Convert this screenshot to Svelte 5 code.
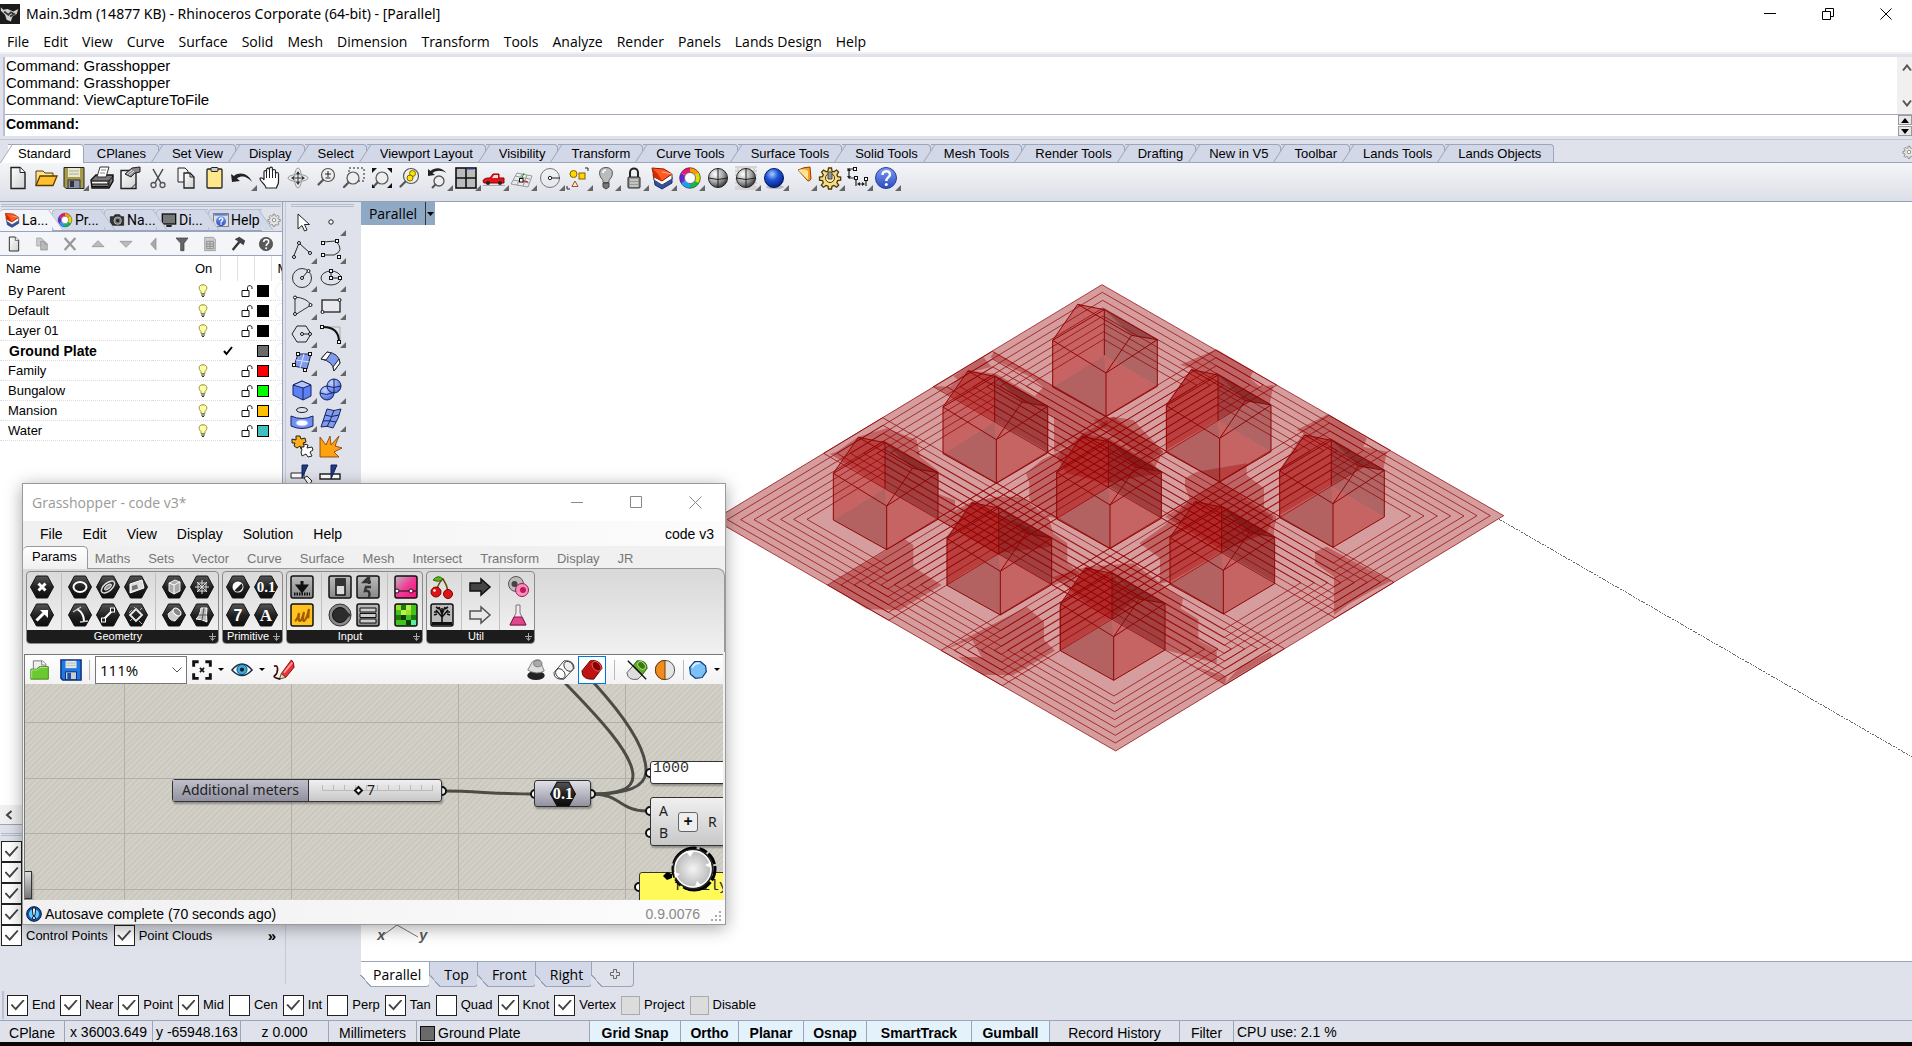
<script>
  const menus = ['File', 'Edit', 'View', 'Curve', 'Surface', 'Solid', 'Mesh', 'Dimension', 'Transform', 'Tools', 'Analyze', 'Render', 'Panels', 'Lands Design', 'Help'];
  const history = ['Command: Grasshopper', 'Command: Grasshopper', 'Command: ViewCaptureToFile'];
  const tabs = ['Standard', 'CPlanes', 'Set View', 'Display', 'Select', 'Viewport Layout', 'Visibility', 'Transform', 'Curve Tools', 'Surface Tools', 'Solid Tools', 'Mesh Tools', 'Render Tools', 'Drafting', 'New in V5', 'Toolbar', 'Lands Tools', 'Lands Objects'];

  // Names that end in "+" carry a fly-out corner.
  const tools = ['new', 'open', 'save+', 'print', 'props', 'cut', 'copy', 'paste', 'undo+', 'pan', 'rotate', 'zoom', 'zoomwin', 'zoomext', 'zoomsel', 'undoview+', 'fourview+', 'car+', 'cplane+', 'radius+', 'osnap+', 'bulb+', 'lock+', 'layers+', 'wheel+', 'sphere', 'sphereg+', 'ball+', 'spot+', 'gear+', 'dims+', 'help+'];
  const palette = ['arrow', 'point+', 'poly+', 'curve+', 'circle+', 'ellipse+', 'arc+', 'rect+', 'polygon+', 'fillet+', 'patch+', 'sweep+', 'box+', 'spheres+', 'tube+', 'surf+', 'puzzle', 'burst', 'trim', 'split'];
  const panelTabs = [['layers', 'La...'], ['wheel', 'Pr...'], ['camera', 'Na...'], ['monitor', 'Di...'], ['helpwin', 'Help']];
  const panelTools = ['new', 'copyg', 'delete', 'up', 'down', 'left', 'filter', 'grid', 'hammer', 'helpg'];
  const layers = [
    ['By Parent', '#000000'], ['Default', '#000000'], ['Layer 01', '#000000'], ['Ground Plate', '#6a6a6a'],
    ['Family', '#ff0000'], ['Bungalow', '#00ff00'], ['Mansion', '#ffc000'], ['Water', '#40c0c0']
  ];
  const osnaps = [['End', 1], ['Near', 1], ['Point', 1], ['Mid', 1], ['Cen', 0], ['Int', 1], ['Perp', 0], ['Tan', 1], ['Quad', 0], ['Knot', 1], ['Vertex', 1], ['Project', 2], ['Disable', 2]];
  const toggles = [['Grid Snap', 91], ['Ortho', 58], ['Planar', 65], ['Osnap', 63], ['SmartTrack', 105], ['Gumball', 78]];

  const ghMenus = ['File', 'Edit', 'View', 'Display', 'Solution', 'Help'];
  const ghTabs = ['Params', 'Maths', 'Sets', 'Vector', 'Curve', 'Surface', 'Mesh', 'Intersect', 'Transform', 'Display', 'JR'];
  const ghGroups = [
    { name: 'Geometry', cols: [[['hx', 'hvec']], [['hcirc', 'harc'], ['hellipse', 'hline'], ['hplane', 'hrect']], [['hbox', 'hcyl'], ['hmesh', 'hsrf']]] },
    { name: 'Primitive', cols: [[['hbool', 'hint'], ['hnum', 'htext']]] },
    { name: 'Input', cols: [[['sbutton', 'sgraph']], [['stoggle', 'sknob'], ['sdigit', 'slist']], [['sgrad', 'sswatch']]] },
    { name: 'Util', cols: [[['cherry', 'stree']], [['arrdark', 'arrlight']], [['cells', 'flask']]] }
  ];

  const hex = (s) => `<path d="M6.500 1h11L23.500 12l-6 11h-11L.5 12z" fill="url(#hexfill)" stroke="#111"/>${s}`;
  const sq = (s, f = 'url(#sqfill)') => `<rect x="1" y="1" width="22" height="22" rx="2" fill="${f}" stroke="#111" stroke-width="1.500"/>${s}`;
  const glass = (x, y, r) => `<path d="M${x - r * 0.7} ${y + r * 0.7}L${x - r - 3} ${y + r + 3}" stroke="#555" stroke-width="2.200" stroke-linecap="round"/><circle cx="${x}" cy="${y}" r="${r}" fill="#eee" stroke="#555" stroke-width="1.200"/>`;
  const pts = (list) => list.map(([x, y]) => `<rect x="${x - 1.5}" y="${y - 1.5}" width="3" height="3" fill="#fff" stroke="#111"/>`).join('');
  const gearPath = 'M10.500 2h3l.5 3 2 .8 2.600-1.800 2 2.100-1.700 2.600.8 2 3 .4v3l-3 .5-.8 2 1.800 2.500-2.100 2.100-2.600-1.700-2 .8-.5 2.700h-3l-.5-2.700-2-.8-2.600 1.700-2.100-2.100L5.300 16.600l-.8-2-3-.5v-3l3-.4.8-2-1.700-2.600 2-2.100L8.200 5.800l1.800-.8z';

  const icons = {
    new: '<path d="M5 1.500h9l5 5v16H5z" fill="url(#paper)" stroke="#222" stroke-width="1.400"/><path d="M14 1.500v5h5" fill="#fff" stroke="#222"/>',
    open: '<path d="M2 19V5h7l2 2h8v4" fill="#ffe28a" stroke="#5a3c00"/><path d="M2 19.500L6 10h17l-4 9.500z" fill="#ffbf2e" stroke="#5a3c00" stroke-width="1.300"/>',
    save: '<path d="M2 1.500h20v21H4l-2-2z" fill="#a79c4c" stroke="#222"/><rect x="6" y="2" width="12" height="9" fill="#ece9c8"/><path d="M7 5h10M7 8h10" stroke="#aaa"/><rect x="6" y="14" width="12" height="8.500" fill="#8b93a8" stroke="#333"/><rect x="8" y="15" width="4" height="6" fill="#333"/>',
    print: '<path d="M1 14l5-5h17v6l-4 7H2z" fill="#777" stroke="#111" stroke-width="1.400"/><path d="M7 11l3-10h9l-3 10z" fill="#fff" stroke="#333"/><path d="M11 4h5M10 7h5" stroke="#888"/><path d="M2 15.500h15v2.500H2z" fill="#f4f4f4"/><path d="M1 15h18l4-5M2 18h17M2 20.500h16M19 15v7" stroke="#111" fill="none"/>',
    props: '<path d="M3 4.500h15v18H3z" fill="url(#paper)" stroke="#222" stroke-width="1.400"/><path d="M7 8l7-6 8-1v5l-5 1-4 4z" fill="#888" stroke="#222"/><path d="M9 8l5-4M11 9l5-4" stroke="#eee"/><path d="M13 22.500l5-5" stroke="#222"/>',
    cut: '<path d="M7 3l8 14M17 3L9 17" stroke="#444" stroke-width="1.500"/><circle cx="7.500" cy="19" r="2.500" fill="none" stroke="#555" stroke-width="1.300"/><circle cx="16.500" cy="19" r="2.500" fill="none" stroke="#555" stroke-width="1.300"/>',
    copy: '<path d="M4 2h7l3 3v11H4z" fill="#f4f4f4" stroke="#222"/><path d="M10 7h6l4 4v11H10z" fill="url(#paper)" stroke="#222" stroke-width="1.300"/><path d="M16 7v4h4" fill="none" stroke="#222"/>',
    copyg: '<path d="M4 3h7l3 3v9H4z" fill="#ccc" stroke="#999"/><path d="M10 8h6l4 4v9H10z" fill="#b9b9b9" stroke="#8d8d8d"/><path d="M16 8v4h4" fill="none" stroke="#8d8d8d"/>',
    paste: '<rect x="5" y="3" width="15" height="19" rx="1" fill="#ffe88c" stroke="#222" stroke-width="1.300"/><rect x="9" y="1.500" width="7" height="4" rx="1" fill="#ccc" stroke="#222"/>',
    undo: '<path d="M1 8l1 8 8-1-3-2.500c5-3.500 10-2 15 3.500C19 8 10 5 4 10z" fill="#222"/>',
    pan: '<path d="M8 22c0-3-6-7-6-9s3-1 4 1V6c0-2 2.500-2 2.500 0V4c0-2.500 3-2.500 3 0V3c0-2.500 3-2.500 3 0v2c0-2 3-2 3 0v3c0-2 3-2 3 0v8c0 3-2 4-2 6z" fill="#fff" stroke="#222" stroke-width="1.200"/><path d="M8.500 6v6M11.500 4v8M14.500 4v8M17.500 6v6" stroke="#222"/>',
    rotate: '<ellipse cx="12" cy="12" rx="10" ry="3.500" fill="none" stroke="#999"/><ellipse cx="12" cy="12" rx="3.500" ry="10" fill="none" stroke="#999"/><path d="M12 8v8M9 12h6" stroke="#333"/><path d="M12 5l2 3h-4zM12 19l2-3h-4zM5 12l3-2v4zM19 12l-3-2v4z" fill="#333"/>',
    zoom: glass(14, 9, 6.5) + '<path d="M11 8h6M14 5v6M11.500 12h5" stroke="#222"/>',
    zoomwin: '<rect x="7" y="2" width="15" height="13" fill="none" stroke="#222" stroke-dasharray="2 2"/>' + glass(11, 12, 6),
    zoomext: glass(12, 12, 6) + '<path d="M2 2h5L2 7zM22 2h-5l5 5zM22 22h-5l5-5zM2 18v4h3z" fill="#111"/>',
    zoomsel: glass(13, 10, 7.5) + '<circle cx="14.500" cy="7.500" r="3" fill="#ffe300" stroke="#776a00"/><circle cx="12" cy="12" r="3" fill="#ffe300" stroke="#776a00"/>',
    undoview: '<circle cx="13" cy="15" r="5" fill="#eee" stroke="#555" stroke-width="1.300"/><path d="M10 18l-4 4" stroke="#555" stroke-width="2"/><path d="M2 3v7l7-1-2.500-2c4-3 9-3 14 0C16 1 9 1 4.500 5z" fill="#222"/>',
    fourview: '<rect x="2" y="2" width="20" height="20" fill="#bbb" stroke="#111" stroke-width="1.600"/><path d="M12 2v20M2 12h20" stroke="#111" stroke-width="1.600"/><path d="M12 3h8" stroke="#2a3fb0"/>',
    car: '<path d="M1 15c1-3 4-3 7-3l3-4h6v4h5v5H2z" fill="#e0151a" stroke="#8c0004"/><path d="M12 9h4v3h-6z" fill="#ffd5d5"/><circle cx="6" cy="17" r="2" fill="#222"/><circle cx="18" cy="17" r="2" fill="#222"/><path d="M1 19.500h22" stroke="#aaa"/>',
    cplane: '<path d="M7 7l15 3-4 11L1 18zM5 10l15 3M3 14l16 3M12 8L7 19M17 9l-4 11" fill="none" stroke="#999"/><path d="M11 14l7 2" stroke="#d00"/><path d="M11 14l3-7" stroke="#0a0"/><rect x="9.500" y="12.500" width="3.500" height="3.500" fill="#fff" stroke="#111"/>',
    radius: '<circle cx="12" cy="12" r="9.500" fill="none" stroke="#777"/><path d="M13 12h9" stroke="#222"/><circle cx="12" cy="12" r="1.700" fill="#fff" stroke="#222"/>',
    osnap: '<circle cx="7.500" cy="8" r="3.500" fill="#ffd800" stroke="#8a5a00"/><rect x="13" y="7" width="6" height="6" fill="#ffd800" stroke="#8a5a00"/><path d="M9 15l3 5.500H6z" fill="#fff0c8" stroke="#a0502a"/><path d="M19 2h3v3M1 20v3h3" fill="none" stroke="#222"/>',
    bulb: '<path d="M12 1.500c8 0 7.500 8 4 11.500-1 1-1 2-1 3.500H9c0-1.500 0-2.500-1-3.500C4.500 9.500 4 1.500 12 1.500z" fill="#bbb" stroke="#555"/><path d="M9 17h6v4l-3 2-3-2z" fill="#777" stroke="#444"/><path d="M9 7c0-2 1-3 3-3" stroke="#fff" stroke-width="1.500" fill="none"/>',
    lock: '<path d="M8 11V6.500c0-5.500 8-5.500 8 0V11" fill="none" stroke="#222" stroke-width="2"/><rect x="6" y="11" width="12" height="11" rx="1" fill="#999" stroke="#222"/><path d="M8 14h8M8 17h8M8 20h8" stroke="#eee"/>',
    layers: '<path d="M4 12l1 7 7 4 10-6V11l-10 6z" fill="#2f52a8" stroke="#1d2e66"/><path d="M3 8l1 6 8 5 10-6V8l-10 6z" fill="#fff" stroke="#444"/><path d="M2 2l12 1 8 5-10 7-8-4z" fill="#ff5a24" stroke="#8b1a00"/><path d="M2 2l6 6 4 7-8-4z" fill="#d42a00"/><path d="M12 6l10 2" stroke="#ffb08c"/>',
    wheel: '<g fill="none" stroke-width="4.500"><path d="M12 4a8 8 0 0 1 7 4" stroke="#ff9800"/><path d="M19 8a8 8 0 0 1 0 8" stroke="#d8e000"/><path d="M19 16a8 8 0 0 1-7 4" stroke="#12b84a"/><path d="M12 20a8 8 0 0 1-7-4" stroke="#11a0ff"/><path d="M5 16a8 8 0 0 1 0-8" stroke="#6a24e0"/><path d="M5 8a8 8 0 0 1 7-4" stroke="#f0146c"/></g><circle cx="12" cy="12" r="10.300" fill="none" stroke="#333" stroke-width=".7"/><circle cx="12" cy="12" r="5.500" fill="#fff" stroke="#333" stroke-width=".7"/>',
    sphere: '<circle cx="12" cy="12" r="9.500" fill="url(#steel)" stroke="#222"/><path d="M12 2.500v19M2.500 12q9.500 3 19 0" stroke="#222" fill="none"/>',
    sphereg: '<rect x="1" y="0" width="22" height="24" fill="#d4d4d4"/><path d="M1 3h22M1 7h22M1 11h22M1 15h22M1 19h22" stroke="#fff" stroke-dasharray="2 2"/><circle cx="12" cy="12" r="9.500" fill="url(#steel)" stroke="#222"/><path d="M12 2.500v19M2.500 12q9.500 3 19 0" stroke="#222" fill="none"/>',
    ball: '<ellipse cx="13" cy="21" rx="9" ry="2" fill="#bbb"/><circle cx="12" cy="12" r="9.500" fill="url(#blue)" stroke="#001a66"/>',
    spot: '<path d="M8 4q6-3 12-3l1 12q-1 2-3 2z" fill="#ff9d1e" stroke="#8a3c00"/><path d="M8 4q6-2 10 1l0 9z" fill="#ffe49c"/>',
    gear: `<path d="${gearPath}" fill="#f4dc88" stroke="#4d3600" stroke-width="1.300"/><circle cx="12" cy="12" r="4.500" fill="#fff0b8" stroke="#4d3600"/><path d="M10 13V6h4v7z" fill="#999" stroke="#444"/>`,
    gearg: `<path d="${gearPath}" fill="#e6e6e6" stroke="#888" stroke-width="1.600"/><circle cx="12" cy="12" r="3" fill="#fff" stroke="#888" stroke-width="1.600"/>`,
    dims: '<path d="M3 3v9M1 3h7M3 12h7v8M20 12v8M12 18h6" fill="none" stroke="#222" stroke-width="1.200"/><path d="M3 2l2 3H1zM3 13l2-3H1zM11 18l3-2v4zM19 18l-3-2v4z" fill="#222"/>' + pts([[9, 3], [10, 12], [20, 13]]),
    help: '<circle cx="12" cy="12" r="10.500" fill="url(#helpb)" stroke="#2a3c9a"/><path d="M8.500 9c0-5 7.500-5 7.500-.5 0 3-3.700 3-3.700 6.500" fill="none" stroke="#fff" stroke-width="2.400"/><circle cx="12.300" cy="18.500" r="1.500" fill="#fff"/>',
    helpg: '<circle cx="12" cy="12" r="10" fill="#5a5a5a" stroke="#444"/><path d="M8.500 9c0-5 7.500-5 7.500-.5 0 3-3.700 3-3.700 6.500" fill="none" stroke="#fff" stroke-width="2.400"/><circle cx="12.300" cy="18.500" r="1.500" fill="#fff"/>',
    helpwin: '<rect x="1" y="2" width="22" height="20" fill="#ddd" stroke="#555"/><path d="M2 4h20" stroke="#5a7fd0" stroke-width="3"/><circle cx="12" cy="14" r="7.500" fill="url(#helpb)"/><path d="M9.500 12c0-4 5-4 5-.5 0 2-2.500 2-2.500 4.500M12 17v2" fill="none" stroke="#fff" stroke-width="2"/>',
    camera: '<path d="M2 7h5l2-3h7l2 3h4v13H2z" fill="#333" stroke="#111"/><circle cx="13" cy="13" r="5.500" fill="#777" stroke="#ddd"/><circle cx="13" cy="13" r="2.500" fill="#222"/>',
    monitor: '<rect x="2" y="3" width="20" height="15" fill="#777" stroke="#111" stroke-width="2"/><path d="M8 21h8" stroke="#222" stroke-width="3"/>',
    delete: '<path d="M4 3l16 18M20 3L4 21" stroke="#999" stroke-width="3.500"/>',
    up: '<path d="M12 7l9 9H3z" fill="#bbb" stroke="#888"/>',
    down: '<path d="M12 17l9-9H3z" fill="#bbb" stroke="#888"/>',
    left: '<path d="M7 12l8-9v18z" fill="#aaa" stroke="#888"/>',
    filter: '<path d="M3 3h18l-6 8v11h-5V11z" fill="#666" stroke="#333"/>',
    grid: '<path d="M4 2h13l3 3v17H4z" fill="#ccc" stroke="#888"/><path d="M7 8h10v11H7zM12 8v11M7 12h10M7 15.500h10" stroke="#888" fill="none" stroke-width="1.300"/>',
    hammer: '<path d="M4 21l9-11" stroke="#333" stroke-width="3.500"/><path d="M8 5l6-3 8 5-2 6-4-3-3 1-1-4z" fill="#444" stroke="#222"/>',
    arrow: '<path d="M8 4v15l4-3.500 2.500 5.500 2.500-1-2.500-5.500h5z" fill="#fff" stroke="#222"/>',
    point: '<circle cx="12" cy="12" r="2.200" fill="#fff" stroke="#222"/>',
    poly: '<path d="M3 20L9 5l12 11" fill="none" stroke="#222"/><g fill="#fff" stroke="#111"><circle cx="4" cy="19" r="1.500"/><circle cx="9" cy="5" r="1.500"/><circle cx="20" cy="15" r="1.500"/></g>',
    curve: '<path d="M4 4l13-1q9 10-2 14H4" fill="none" stroke="#333"/>' + pts([[4, 5], [18, 3], [4, 17], [20, 19]]),
    circle: '<circle cx="12" cy="12" r="9.500" fill="none" stroke="#333"/><path d="M12 12l6-7" stroke="#222"/><g fill="#fff" stroke="#111"><circle cx="12" cy="12" r="1.500"/><circle cx="18.500" cy="5" r="1.500"/></g>',
    ellipse: '<ellipse cx="12" cy="12" rx="10" ry="7" fill="none" stroke="#333"/><path d="M12 12h10M12 12V5" stroke="#222"/>' + pts([[12, 12], [21, 12], [12, 5]]),
    arc: '<path d="M5 3v18l16-10Q17 4 5 3" fill="none" stroke="#333"/><g fill="#fff" stroke="#111"><circle cx="5" cy="3.500" r="1.500"/><circle cx="5" cy="20" r="1.500"/><circle cx="20.500" cy="11" r="1.500"/></g>',
    rect: '<rect x="3" y="6" width="18" height="12" fill="#e8e8ee" stroke="#222" stroke-width="1.300"/><g fill="#fff" stroke="#111"><circle cx="3.500" cy="18" r="1.500"/><circle cx="20.500" cy="6" r="1.500"/></g>',
    polygon: '<path d="M7 4h9l5 8-5 8H7l-5-8z" fill="none" stroke="#222"/><path d="M12 12h8" stroke="#222"/><g fill="#fff" stroke="#111"><circle cx="12" cy="12" r="1.500"/><circle cx="20" cy="12" r="1.500"/></g>',
    fillet: '<path d="M4 5h17v17" fill="none" stroke="#aaa"/><path d="M4 5c10 0 16 4 16 15" fill="none" stroke="#111" stroke-width="2"/>' + pts([[3, 5], [20, 20]]),
    patch: '<path d="M8 4h13l-4 15-13-3z" fill="#7f9bf0" stroke="#224"/><path d="M14 4l-4 14M6 10l13 2" stroke="#dfe6ff"/>' + pts([[8, 4], [20, 4], [4, 15], [15, 20]]),
    sweep: '<path d="M2 9l6-7q12 1 13 11l-6 8q-1-10-13-12z" fill="#7f9bf0" stroke="#223"/><path d="M2 9l6-7 4 1-5 7zM21 13l-6 8-1-4 6-8z" fill="#fff" stroke="#223"/>',
    box: '<path d="M3 7l9-4 9 4v11l-8 4-10-5z" fill="#5d80f5" stroke="#16235c"/><path d="M3 7l10 3 8-3-9-4z" fill="#b4c5ff" stroke="#16235c"/><path d="M13 10v12" stroke="#16235c"/>',
    spheres: '<circle cx="8" cy="15" r="7" fill="url(#blue2)" stroke="#16235c"/><circle cx="15" cy="8" r="7" fill="url(#blue2)" stroke="#16235c"/><path d="M15 1v14M8 8q6 3 14 0M1 15q7 3 12 0" stroke="#16235c" fill="none"/>',
    tube: '<ellipse cx="12" cy="4" rx="5.500" ry="2.500" fill="none" stroke="#222"/><path d="M1 10q11 5 22 0v10q-11 5-22 0z" fill="#6f90f2" stroke="#16235c"/><ellipse cx="12" cy="17" rx="6" ry="3" fill="#fff" stroke="#aab8ff"/>',
    surf: '<path d="M8 3q7 3 14 0-2 9-8 19-6-3-12-1 3-9 6-18z" fill="#7f9bf0" stroke="#16235c"/><path d="M6 9q6 3 14 0M4 15q6-1 13 1M15 4q-3 9-7 17" stroke="#16235c" fill="none"/>',
    puzzle: '<path d="M2 5l4 1 0-4 4 0 1 3 4-1 1 4-3 1 2 4-4 2-1-3-3 2-3-2 1-3-3 0z" fill="#ffae1a" stroke="#222"/><path d="M11 13l3 0 0-3 4 1-1 3 5-1 1 3-3 2 2 4-4 1-2-3-4 2-1-4 1-2z" fill="#fff" stroke="#222"/>',
    burst: '<path d="M1 3l6 8 4-9 1 9 8-9-4 10 7 2-8 4 5 5H1z" fill="#ffa20f" stroke="#7a3400" stroke-width=".8"/>',
    trim: '<path d="M1 11h13v5H1zM14 16l3-2 5 5-3 4z" fill="#fff" stroke="#222"/><path d="M12 3h6l-6 13z" fill="#1e3a8a" stroke="#102050"/>',
    split: '<path d="M1 12h20v5H1z" fill="#fff" stroke="#222" stroke-width="1.400"/><path d="M12 3h6l-6 14z" fill="#1e3a8a" stroke="#102050"/>',

    hx: hex('<path d="M8.500 8.500l7 7M15.500 8.500l-7 7" stroke="#fff" stroke-width="3"/>'),
    hvec: hex('<path d="M6.500 17.500L14 10" stroke="#fff" stroke-width="3"/><path d="M10 7h8v8z" fill="#fff"/>'),
    hcirc: hex('<ellipse cx="12" cy="12" rx="6.500" ry="5" fill="none" stroke="#fff" stroke-width="2"/>'),
    harc: hex('<path d="M9 6q7 4 7 12" fill="none" stroke="#fff" stroke-width="2"/><path d="M5 9l8-5M12 19l8-1" fill="none" stroke="#ccc" stroke-width="1.400"/>'),
    hellipse: hex('<ellipse cx="12" cy="12" rx="8" ry="4" fill="none" stroke="#ddd" stroke-width="1.500" transform="rotate(-40 12 12)"/><ellipse cx="12" cy="12" rx="4" ry="1.800" fill="#999" stroke="#eee" transform="rotate(-40 12 12)"/>'),
    hline: hex('<path d="M8 16l8-8" stroke="#fff" stroke-width="2"/><rect x="5.500" y="15" width="4" height="4" fill="#222" stroke="#fff"/><rect x="14.500" y="5" width="4" height="4" fill="#222" stroke="#fff"/>'),
    hplane: hex('<path d="M6 9l12-4 2 8-14 5z" fill="#ddd" stroke="#fff"/><path d="M8 11l5-1.500 1 4-6 2z" fill="#777"/>'),
    hrect: hex('<path d="M12 6l6 6-6 6-6-6z" fill="none" stroke="#eee" stroke-width="1.800"/><path d="M10 4l3 3M15 18l3 3M5 10l3-3M16 7l2-2M6 18l2-2" stroke="#bbb"/>'),
    hbox: hex('<path d="M7 8l6-3 5 2v9l-6 3-5-3z" fill="#aaa" stroke="#eee"/><path d="M7 8l5 2 6-3M12 10v9" stroke="#fff" fill="none"/>'),
    hcyl: hex('<path d="M6 11l7-6 6 6-6 7q-6 0-7-7z" fill="#ccc" stroke="#eee"/><ellipse cx="15" cy="9" rx="4.500" ry="3" fill="#888" stroke="#fff" transform="rotate(45 15 9)"/>'),
    hmesh: hex('<path d="M12 5v14M5 12h14M7 7l10 10M17 7L7 17M8 8h8v8H8z" stroke="#ddd" fill="none"/>'),
    hsrf: hex('<path d="M11 5h6q-1 7 0 14-5-3-11-3 4-3 5-11z" fill="#bbb" stroke="#fff"/><path d="M14 5q-1 7-2 12M8 12h9" stroke="#555" fill="none"/>'),
    hbool: hex('<circle cx="12" cy="12" r="5.500" fill="#fff"/><path d="M8.500 15.500l7-7a5 5 0 0 1-7 7z" fill="#222"/>'),
    hnum: hex('<text x="12" y="17" text-anchor="middle" font-family="Liberation Serif" font-weight="700" font-size="15" fill="#fff">0.1</text>'),
    hint: hex('<text x="12" y="17.500" text-anchor="middle" font-family="Liberation Sans" font-weight="700" font-size="16" fill="#fff">7</text>'),
    htext: hex('<text x="12" y="17.500" text-anchor="middle" font-family="Liberation Serif" font-weight="700" font-size="17" fill="#fff">A</text>'),
    sbutton: sq('<path d="M12 6v6M8 11h8l-4 5z" stroke="#111" stroke-width="3" fill="#111"/><path d="M4 19h16" stroke="#111" stroke-width="3" stroke-dasharray="1.500 1"/>'),
    sgraph: sq('<path d="M5 18q3-2 4-8-1 8 1 8 2-1 4-9-2 9 0 9 3-2 5-12-1 8 0 9" fill="none" stroke="#a35a00" stroke-width="2.200"/>', '#ffc31f'),
    stoggle: sq('<rect x="8" y="4" width="9" height="16" fill="#ddd" stroke="#111" stroke-width="1.500"/><rect x="8" y="4" width="9" height="7" fill="#333"/>'),
    sknob: '<circle cx="12" cy="12" r="11" fill="#888" stroke="#333"/><circle cx="12" cy="12" r="7.500" fill="#2c2c2c" stroke="#111"/><path d="M17 7l6 5-6 5z" fill="#2c2c2c"/>',
    sdigit: sq('<path d="M13 2L8 7h7M13 2v7M15 12h-5l-1 4q6-1 4 6" fill="none" stroke="#333" stroke-width="2.500"/>'),
    slist: sq('<path d="M4 5h16v4H4zM4 10.500h16v4H4zM4 16h16v4H4z" fill="#ccc" stroke="#111"/>'),
    sgrad: sq('<path d="M2 16h20" stroke="#111"/><circle cx="3" cy="16" r="2" fill="#fff" stroke="#111"/><circle cx="17" cy="16" r="2" fill="#fff" stroke="#111"/>', 'url(#pink)'),
    sswatch: sq('<path d="M2 2h5v5H2zM12 7h5v5h-5z" fill="#9be02a"/><path d="M7 2h5v5H7zM2 12h5v5H2zM17 12h5v5h-5z" fill="#1d7a12"/><path d="M12 2h5v5h-5zM7 7h5v5H7z" fill="#b9f04a"/><path d="M7 12h5v5H7zM12 17h5v5h-5z" fill="#0c3d06"/><path d="M17 17h5v5h-5z" fill="#5af0a0"/>', '#44c21c'),
    cherry: '<path d="M7 14Q9 7 13 4q4 6 5 12" fill="none" stroke="#6b4a12" stroke-width="1.500"/><path d="M13 4Q8-1 3 5q6 3 10-1z" fill="#5fb41e" stroke="#2c6408"/><circle cx="6" cy="17" r="5" fill="#e01414" stroke="#7a0000"/><circle cx="18" cy="19" r="4.500" fill="#e01414" stroke="#7a0000"/><circle cx="4.500" cy="15.500" r="1.300" fill="#fff"/>',
    stree: sq('<path d="M2 19h20v3H2z" fill="#111"/><path d="M12 20V9M12 14L6 7M12 14l6-7M12 11L9 4M12 11l3-7M8 9H4M16 9h4M9 6L6 4M15 6l3-2M12 12V5M7 11l-3 1M17 11l3 1" stroke="#111" stroke-width="1.600"/>', '#bbb'),
    arrdark: '<path d="M2 8h11V4l9 8-9 8v-4H2z" fill="#444" stroke="#111" stroke-width="1.500"/>',
    arrlight: '<path d="M2 8h11V4l9 8-9 8v-4H2z" fill="#e8e8e8" stroke="#555" stroke-width="1.500"/>',
    cells: '<circle cx="10" cy="9" r="7.500" fill="#bbb" stroke="#555"/><circle cx="8.500" cy="9" r="3" fill="#444"/><circle cx="16" cy="15" r="6.500" fill="#ff8abc" fill-opacity=".9" stroke="#a01450"/><circle cx="17" cy="15" r="3" fill="#c2185b"/>',
    flask: '<path d="M10 2h4v8l6 12H4l6-12z" fill="#f6e6ee" stroke="#777"/><path d="M8 14h8l4 8H4z" fill="#e0488c" stroke="#8a1048"/>',
    gopen: '<path d="M4 12V1h11l4 4v7z" fill="#eee" stroke="#666"/><path d="M14 1v5h5" fill="#fff" stroke="#666"/><path d="M1 23V11h7l3-3h11v15z" fill="#6cc832" stroke="#2d7a0a"/><path d="M2 22V12h7l3-3h9" fill="none" stroke="#b9f08a"/>',
    gsave: '<path d="M1 1h22v22H3l-2-2z" fill="#1e78e6" stroke="#0a2a6e" stroke-width="1.500"/><rect x="6" y="2" width="12" height="8" fill="#e4e4e4"/><path d="M7 4.500h10M7 7h10" stroke="#bbb"/><rect x="6" y="14" width="12" height="8.500" fill="#ccc" stroke="#0a2a6e"/><rect x="8" y="15" width="4" height="7" fill="#1850b0"/>',
    extents: '<path d="M2 8V2h6M16 2h6v6M22 16v6h-6M8 22H2v-6" fill="none" stroke="#111" stroke-width="3.500"/><path d="M9.500 9.500l5 5M14.500 9.500l-5 5" stroke="#111" stroke-width="2"/>',
    eye: '<path d="M1 12q11-13 22 0-11 12-22 0z" fill="#fff" stroke="#12304a" stroke-width="1.600"/><circle cx="12" cy="11.500" r="5.500" fill="#38b0dc" stroke="#0a3c5a"/><circle cx="12" cy="11.500" r="2.300" fill="#06202e"/>',
    pencil: '<path d="M9 16L20 1q3 2 3 8l-9 11z" fill="#e83434" stroke="#8a0000"/><path d="M12 15L21 4" stroke="#ff9c9c" stroke-width="2"/><path d="M9 16l5 4-7 2z" fill="#ffd089" stroke="#444"/><path d="M1 8q4-2 4 3t-3 7 6 4" fill="none" stroke="#3c0a0a" stroke-width="1.800"/>',
    cylflat: '<ellipse cx="12" cy="18" rx="9.500" ry="5" fill="#222"/><path d="M3 12L8 3q4-3 8-2l5 12q-8 5-18-1z" fill="#ddd" stroke="#777"/><ellipse cx="14" cy="5" rx="4.500" ry="3.500" fill="#aaa" stroke="#777"/>',
    cylwire: '<path d="M1 15L12 2q11-1 11 8L12 22Q1 23 1 15z" fill="#fff" stroke="#333"/><ellipse cx="17" cy="8" rx="6" ry="4.500" fill="#eee" stroke="#333" transform="rotate(50 17 8)"/><ellipse cx="8" cy="16" rx="6" ry="4.500" fill="none" stroke="#333" transform="rotate(50 8 16)"/>',
    cylred: '<path d="M1 13L10 2q11-2 13 8L14 22Q1 23 1 13z" fill="#c01414" stroke="#5a0000"/><ellipse cx="17" cy="8" rx="6" ry="4" fill="#8a0000" stroke="#e66" transform="rotate(50 17 8)"/>',
    cylgreen: '<path d="M1 15L8 7l10 10-5 5Q2 24 1 15z" fill="#ddd" stroke="#555"/><path d="M8 7l4-5q11-1 11 8l-5 7z" fill="#5db01e" stroke="#2a5a0a"/><ellipse cx="17" cy="7" rx="5" ry="3.500" fill="#3b7a12" stroke="#b4e68a" transform="rotate(45 17 7)"/><path d="M2 2l20 20" stroke="#111" stroke-width="1.500"/>',
    half: '<circle cx="12" cy="12" r="10.500" fill="#e4e4e4" stroke="#444"/><path d="M12 1.500a10.500 10.500 0 0 0 0 21z" fill="#f08c1e" stroke="#6a3400"/>',
    octa: '<path d="M8 2h7l6 5 1 7-5 7-8 1-6-5-1-8z" fill="#7cc0f8" stroke="#123e86" stroke-width="1.500"/><path d="M5 9q3-6 9-5" stroke="#d8efff" stroke-width="2.500" fill="none"/>',
    alert: '<circle cx="12" cy="12" r="11" fill="#1d4fa8" stroke="#06183c" stroke-width="1.500"/><circle cx="12" cy="12" r="7.500" fill="#5ad0f8"/><path d="M9.500 3h5l-1 11h-3z" fill="#fff" stroke="#06183c" stroke-width="1.500"/><circle cx="12" cy="18" r="2.300" fill="#fff" stroke="#06183c" stroke-width="1.500"/>',
    rhino: '<rect width="24" height="24" fill="#1c1c1c"/><path d="M1 4l3 3 5-1 7 3 6-3-2 6-5 3-2 6-5-2-2-6-5-5z" fill="#d0d0d0"/><path d="M5 9l5 4 3-3 4 2-5 3" stroke="#333" fill="none" stroke-width="2"/>'
  };

  // Isometric scene: nine houses on overlapping contour plates.
  const U = [340.5, 196];
  const V = [-329, 199.5];
  const TOP = [1158, 440];
  const at = (s, t, o = TOP) => [Math.round(o[0] + s * U[0] + t * V[0]), Math.round(o[1] + s * U[1] + t * V[1])];
  const str = (list) => list.map((p) => p.join(',')).join(' ');
  const SIDE = 0.467;
  const STEP = 0.0595;
  const houses = [];
  for (let i = 0; i < 3; i++) for (let j = 0; j < 3; j++) houses.push(at(i, j));
  const square = (o, k) => {
    const a = -SIDE - k * STEP;
    const b = k * STEP;
    return str([at(a, a, o), at(b, a, o), at(b, b, o), at(a, b, o)]);
  };
  const rings = houses.flatMap((o) => [2, 3, 4, 5, 6, 7, 8, 9].map((k) => square(o, k)));
  const plate = (() => {
    const a = -SIDE - 9 * STEP;
    const b = 2 + 9 * STEP;
    return str([at(a, a), at(b, a), at(b, b), at(a, b)]);
  })();
  const patches = [
    '700,318 790,262 815,290 780,300 740,305 715,330',
    '822,245 1165,440 1160,470 1002,548 1002,440 985,430 985,402 945,378 970,352 930,320 850,282 812,262',
    '640,348 690,350 745,300 830,312 985,402 985,545 830,457',
    '330,552 350,545 415,500 500,475 590,510 600,560 655,602 655,672 705,690 705,720 655,747 495,657',
    '918,610 965,570 1065,520 1090,490 1180,440 1240,450 1330,545 1300,600 1325,612 1325,745 1170,650 1010,745 985,740 928,690 928,640',
    '1010,560 1090,490 1165,505 1290,575 1330,610 1260,620 1160,640 1040,610',
    '680,945 680,800 755,695 830,680 900,680 985,740 1000,790 1042,820 1042,880 1080,910 1000,947 835,852 740,905',
    '655,748 755,695 995,805 995,830 830,850 760,810',
    '1018,1142 1018,1010 1100,890 1240,880 1350,960 1390,985 1382,1015 1435,1048 1435,1110 1490,1140 1490,1180 1335,1140 1175,1045',
    '1000,920 1100,890 1175,920 1260,980 1175,1045 1100,1000',
    '325,945 555,808 580,825 580,890 665,945 540,1020 440,1018',
    '665,1142 920,1010 972,1055 972,1110 1005,1142 880,1215 790,1215 715,1160 785,1162 755,1108',
    '1338,540 1338,402 1415,295 1380,285 1490,238 1600,302 1590,325 1620,350 1660,345 1650,402 1590,395 1492,450',
    '1678,736 1678,600 1750,490 1730,480 1825,432 1940,505 1930,530 2000,545 1990,600 1930,590 1834,645',
    '1395,625 1430,605 1580,580 1580,615 1632,655 1632,715 1670,740 1662,780 1662,935 1505,845 1350,935 1320,940 1320,865 1258,820 1335,765 1410,690 1395,650',
    '1335,740 1500,635 1660,740 1640,790 1505,840',
    '1120,450 1180,440 1330,545 1285,575',
    '1785,845 1820,830 1950,900 2015,932 1960,960 1890,1000 1842,1035 1842,920 1785,880',
    '1515,1240 1560,1190 1650,1145 1658,1155',
    '1430,1190 1520,1222 1515,1242'
  ];
  const facets = [
    ['rgba(180,0,0,.37)', '-160,-89 -160,-229 -85,-337 -5,-321 -5,-184'],
    ['rgba(110,0,0,.36)', '-5,-184 -5,-321 154,-231 154,-91'],
    ['rgba(80,0,0,.28)', '-5,-321 77,-244 154,-231'],
    ['rgba(126,0,0,.38)', '-160,-89 -5,-184 0,-131 0,0'],
    ['rgba(172,0,0,.36)', '0,0 0,-131 -5,-184 154,-91']
  ];
  const edges = 'M0 0L-160-89V-229L-85-337L-5-321L154-231V-91ZM0 0V-131L-160-229L-5-321M154-231L0-131L77-244L154-231M-5-321V-184M-85-337L77-244';

  let meters = $state(7);
</script>

{#snippet icon(name, cls = 'i24')}
  <svg class={cls} viewBox="0 0 24 24" fill="none" aria-hidden="true">{@html icons[name.replace('+', '')]}</svg>
{/snippet}

<svg class="defs" width="0" height="0" aria-hidden="true">
  <defs>
    <linearGradient id="paper" x1="0" y1="0" x2="1" y2="1"><stop offset="0" stop-color="#fff" /><stop offset="1" stop-color="#cfcfcf" /></linearGradient>
    <linearGradient id="hexfill" x1="0" y1="0" x2="0" y2="1"><stop offset="0" stop-color="#555" /><stop offset=".5" stop-color="#222" /><stop offset="1" stop-color="#0c0c0c" /></linearGradient>
    <linearGradient id="sqfill" x1="0" y1="0" x2="0" y2="1"><stop offset="0" stop-color="#bbb" /><stop offset="1" stop-color="#888" /></linearGradient>
    <linearGradient id="pink" x1="0" y1="0" x2="1" y2="1"><stop offset="0" stop-color="#bbb" /><stop offset=".5" stop-color="#ee3c96" /><stop offset="1" stop-color="#ff0a78" /></linearGradient>
    <radialGradient id="steel" cx=".35" cy=".3" r=".8"><stop offset="0" stop-color="#fff" /><stop offset=".5" stop-color="#aaa" /><stop offset="1" stop-color="#222" /></radialGradient>
    <radialGradient id="blue" cx=".4" cy=".3" r=".8"><stop offset="0" stop-color="#a8ccff" /><stop offset=".4" stop-color="#1e56d8" /><stop offset="1" stop-color="#001470" /></radialGradient>
    <radialGradient id="blue2" cx=".35" cy=".3" r=".8"><stop offset="0" stop-color="#c8d8ff" /><stop offset="1" stop-color="#3a60e0" /></radialGradient>
    <linearGradient id="helpb" x1="0" y1="0" x2="0" y2="1"><stop offset="0" stop-color="#7b9cf4" /><stop offset="1" stop-color="#2c4cc0" /></linearGradient>
    <radialGradient id="orb" cx=".5" cy=".5" r=".6"><stop offset="0" stop-color="#f4f4f4" /><stop offset="1" stop-color="#aaa" /></radialGradient>
  </defs>
</svg>

<div class="app">
  <header class="title">
    {@render icon('rhino', 'i20')}
    <span class="caption">Main.3dm (14877 KB) - Rhinoceros Corporate (64-bit) - [Parallel]</span>
    <div class="winbtns">
      <button aria-label="Minimize"><svg width="12" height="12"><path d="M0 5.500h12" stroke="#000" /></svg></button>
      <button aria-label="Restore"><svg width="12" height="12" fill="none" stroke="#000"><path d="M.5 3.500h8v8h-8zM3.500 3V.5h8v8H9" /></svg></button>
      <button aria-label="Close"><svg width="12" height="12"><path d="M.5.5l11 11M11.500.5l-11 11" stroke="#000" /></svg></button>
    </div>
  </header>

  <nav class="menu">{#each menus as m}<button>{m}</button>{/each}</nav>

  <section class="command">
    <div class="log">
      <div class="lines">{#each history as h}<div>{h}</div>{/each}</div>
      <div class="scroll">
        <button aria-label="Scroll up"><svg width="10" height="8"><path d="M1 6.500l4-5 4 5" fill="none" stroke="#555" stroke-width="2" /></svg></button>
        <button aria-label="Scroll down"><svg width="10" height="8"><path d="M1 1.500l4 5 4-5" fill="none" stroke="#555" stroke-width="2" /></svg></button>
      </div>
    </div>
    <div class="prompt">
      <label for="cmd">Command:</label><input id="cmd" type="text" />
      <div class="spin">
        <button aria-label="Previous"><svg width="8" height="5"><path d="M4 0l4 5H0z" /></svg></button>
        <button aria-label="Next"><svg width="8" height="5"><path d="M4 5l4-5H0z" /></svg></button>
      </div>
    </div>
  </section>

  <section class="bars">
    <div class="tabs">
      {#each tabs as t, i}<button class="tab" class:on={i === 0}>{t}</button>{/each}
      <span class="cog">{@render icon('gearg', 'i14')}</span>
    </div>
    <div class="tools">
      {#each tools as t}<button class="tool" class:fly={t.endsWith('+')} aria-label={t}>{@render icon(t)}</button>{/each}
    </div>
  </section>

  <main class="work">
    <div class="side">
      <section class="panel">
        <div class="grip"></div>
        <div class="ptabs">
          {#each panelTabs as [ic, label], i}<button class="ptab" class:on={i === 0}>{@render icon(ic, 'i16')}<span>{label}</span></button>{/each}
          <div class="pcog">{@render icon('gearg', 'i14')}</div>
        </div>
        <div class="ptools">{#each panelTools as t}<button aria-label={t}>{@render icon(t, 'i16')}</button>{/each}</div>
        <table class="layers">
          <colgroup><col class="c1" /><col class="c2" /><col class="c3" /><col class="c3" /><col class="c3" /><col /></colgroup>
          <thead><tr><th>Name</th><th>On</th><th></th><th></th><th></th><th>M</th></tr></thead>
          <tbody>
            {#each layers as [name, color]}
              {@const cur = name === 'Ground Plate'}
              <tr class:cur>
                <td>{name}</td>
                <td>{#if !cur}<svg width="10" height="14"><path d="M5 .8c5 0 4.500 4.500 2 6.700v2H3v-2C.5 5.300 0 .8 5 .8z" fill="#ffffa0" stroke="#8c8c3c" /><path d="M3 11h4M4 12.500h2" stroke="#333" /></svg>{/if}</td>
                <td>{#if cur}<svg width="10" height="10"><path d="M1 5l2.500 3L9 1" fill="none" stroke="#000" stroke-width="2" /></svg>{/if}</td>
                <td>{#if !cur}<svg width="12" height="12" fill="none" stroke="#111"><path d="M1 5.500h7v6H1zM6.500 5V2.500c0-2.500 4.500-2.500 4.500 0V4" /></svg>{/if}</td>
                <td><span class="swatch" style:background={color}></span></td>
                <td><span class="mat"></span></td>
              </tr>
            {/each}
          </tbody>
        </table>
      </section>
      <div class="hscroll"><button aria-label="Scroll left"><svg width="8" height="10"><path d="M6.500 1L2 5l4.500 4" fill="none" stroke="#444" stroke-width="2" /></svg></button></div>
      <section class="filters">
        <div class="grip"></div>
        <div class="checks">
          {#each [1, 2, 3, 4] as n}<div class="frow"><input class="cb" type="checkbox" checked aria-label="Selection filter {n}" /></div>{/each}
          <div class="frow">
            <label><input class="cb" type="checkbox" checked />Control Points</label>
            <label><input class="cb" type="checkbox" checked />Point Clouds</label>
            <button class="more" aria-label="More filters">»</button>
          </div>
        </div>
      </section>
    </div>

    <div class="palette">
      <div class="grip"></div>
      <div class="pgrid">
        {#each palette as t}<button class="tool" class:fly={t.endsWith('+')} aria-label={t}>{@render icon(t)}</button>{/each}
      </div>
    </div>

    <div class="viewcol">
      <div class="viewport">
        <svg class="scene" aria-hidden="true">
          <g transform="translate(359 68) scale(.33333)">
            <path class="axis" d="M2310 732L3580 1463" />
            <polygon points={plate} fill="#d59d9d" />
            {#each patches as p}<polygon points={p} fill="rgba(150,0,0,.36)" />{/each}
            {#each houses as h}
              <g transform="translate({h[0]} {h[1]})">
                {#each facets as [fill, p]}<polygon points={p} {fill} />{/each}
              </g>
            {/each}
            <g class="ring">{#each rings as r}<polygon points={r} />{/each}</g>
            {#each houses as h}<path class="edge" transform="translate({h[0]} {h[1]})" d={edges} />{/each}
          </g>
          <path d="M21 734L36 723L57 735" fill="none" stroke="#777" />
          <text x="16" y="738">x</text><text x="58" y="738">y</text>
        </svg>
        <div class="vlabel"><button>Parallel</button><button class="vdrop" aria-label="Viewport menu"><svg width="7" height="4"><path d="M0 0h7L3.500 4z" /></svg></button></div>
      </div>
      <div class="vtabs">
        {#each ['Parallel', 'Top', 'Front', 'Right'] as t, i}<button class="vtab" class:on={i === 0}>{t}</button>{/each}
        <button class="vtab plus" aria-label="New viewport"><svg width="10" height="10"><path d="M3.500.5h3v3h3v3h-3v3h-3v-3h-3v-3h3z" fill="none" stroke="#666" /></svg></button>
      </div>
    </div>
  </main>

  <div class="osnap">
    {#each osnaps as [name, st]}
      <label><input class="cb" type="checkbox" checked={st === 1} disabled={st === 2} />{name}</label>
    {/each}
  </div>

  <footer class="status">
    <button class="cell w65">CPlane</button>
    <span class="cell w88">x 36003.649</span>
    <span class="cell w88 tight">y -65948.163</span>
    <span class="cell w88">z 0.000</span>
    <button class="cell w88">Millimeters</button>
    <button class="cell cur"><i></i>Ground Plate</button>
    {#each toggles as [t, w]}<button class="cell act" style:width="{w}px">{t}</button>{/each}
    <button class="cell rec">Record History</button>
    <button class="cell w53">Filter</button>
    <span class="cell cpu">CPU use: 2.1 %</span>
  </footer>
  <div class="taskbar"></div>

  <section class="gh">
    <header class="ghtitle">
      <span>Grasshopper - code v3*</span>
      <div class="ghbtns">
        <button aria-label="Minimize"><svg width="13" height="13"><path d="M0 6.500h12" stroke="#888" /></svg></button>
        <button aria-label="Maximize"><svg width="13" height="13"><path d="M.5.5h11v11H.5z" fill="none" stroke="#888" /></svg></button>
        <button aria-label="Close"><svg width="13" height="13"><path d="M.5.5l12 12M12.500.5l-12 12" stroke="#888" /></svg></button>
      </div>
    </header>
    <nav class="ghmenu">{#each ghMenus as m}<button>{m}</button>{/each}<button class="doc">code v3</button></nav>
    <div class="ghtabs">{#each ghTabs as t, i}<button class:on={i === 0}>{t}</button>{/each}</div>
    <div class="ribbon">
      {#each ghGroups as g}
        <div class="group">
          <div class="gicons">
            {#each g.cols as block}
              <div class="block">
                {#each block as col}<div class="gcol">{#each col as n}<button aria-label={n}>{@render icon(n)}</button>{/each}</div>{/each}
              </div>
            {/each}
          </div>
          <div class="gname"><span>{g.name}</span><svg width="7" height="8"><path d="M3.500 0v7M0 3.500h7M1.500 5l2 2.500 2-2.500" stroke="#aaa" fill="none" /></svg></div>
        </div>
      {/each}
    </div>
    <div class="ghbar">
      <button aria-label="Open">{@render icon('gopen', 'i20')}</button>
      <button class="gap3" aria-label="Save">{@render icon('gsave', 'i22')}</button>
      <i class="sep"></i>
      <div class="zoombox">
        <select aria-label="Zoom"><option>111%</option></select>
        <svg width="10" height="6"><path d="M.5.5L5 5 9.500.5" fill="none" stroke="#555" /></svg>
      </div>
      <button class="dd" aria-label="Zoom extents">{@render icon('extents', 'i20')}<i class="tri"></i></button>
      <button class="dd" aria-label="Named views">{@render icon('eye', 'i22')}<i class="tri"></i></button>
      <button aria-label="Sketch">{@render icon('pencil', 'i22')}</button>
      <span class="push"></span>
      <button aria-label="No preview">{@render icon('cylflat', 'i22')}</button>
      <button aria-label="Wireframe preview">{@render icon('cylwire', 'i22')}</button>
      <button class="sel" aria-label="Shaded preview">{@render icon('cylred', 'i22')}</button>
      <i class="sep wide"></i>
      <button aria-label="Preview selected">{@render icon('cylgreen', 'i22')}</button>
      <button aria-label="Document preview">{@render icon('half', 'i22')}</button>
      <i class="sep"></i>
      <button class="dd last" aria-label="Mesh quality">{@render icon('octa', 'i20')}<i class="tri"></i></button>
    </div>
    <div class="canvas">
      <svg class="wires" aria-hidden="true">
        <path d="M99.500 0V215M266.500 0V215M433.500 0V215M600.500 0V215M0 38.500H698M0 94.500H698M0 149.500H698M0 205.500H698" stroke="#b3b0a7" />
        <g fill="none" stroke="#4c4c46" stroke-width="3">
          <path d="M419 107C450 107 470 110 508 110" />
          <path d="M540-1C575 35 608 70 608 92C608 106 592 110 568 110" />
          <path d="M569-1C600 33 622 65 621 88C620 104 598 110 568 110" />
          <path d="M568 110C595 110 595 127 622 127" />
        </g>
        <g fill="#fff" stroke="#111" stroke-width="2">
          <circle cx="417" cy="107" r="4" /><circle cx="510" cy="110" r="4" /><circle cx="566" cy="110" r="4" />
          <circle cx="625" cy="89" r="4" /><circle cx="625" cy="127" r="4" /><circle cx="625" cy="149" r="4" /><circle cx="614" cy="203" r="4" />
        </g>
      </svg>
      <div class="node slider">
        <label for="meters">Additional meters</label>
        <div class="track"><input id="meters" type="range" min="0" max="20" bind:value={meters} /><output for="meters">{meters}</output></div>
      </div>
      <div class="node param">{@render icon('hnum', 'i26')}</div>
      <div class="node panel1">1000</div>
      <div class="node add"><div class="io"><span>A</span><span>B</span></div><b>+</b><span>R</span></div>
      <div class="node note">family</div>
      <div class="node stub"></div>
      <svg class="compass" viewBox="0 0 48 48" aria-hidden="true">
        <circle cx="25" cy="24" r="21" fill="none" stroke="#000" stroke-width="3" stroke-dasharray="12 2 30 3 8 2" />
        <circle cx="24" cy="24" r="19.500" fill="url(#orb)" stroke="#222" stroke-width="2" />
        <circle cx="24" cy="24" r="18" fill="none" stroke="#fff" stroke-width="1.500" />
        <path d="M17 6h8l-4 6zM42 17v6l-6-3zM5 27l6 2-5 4zM26 42l2-6 5 5z" fill="#fff" />
      </svg>
      <svg class="needle" width="10" height="8" aria-hidden="true"><path d="M0 4l4-4 5 2v4l-5 2z" /></svg>
    </div>
    <footer class="ghstatus">{@render icon('alert', 'i16')}<span>Autosave complete (70 seconds ago)</span><em>0.9.0076</em>
      <svg width="11" height="11" fill="#aaa"><path d="M8 0h2v2H8zM4 4h2v2H4zM8 4h2v2H8zM0 8h2v2H0zM4 8h2v2H4zM8 8h2v2H8z" /></svg>
    </footer>
  </section>
</div>

<style>
  :global(body) { margin: 0; background: #fff; }
  button, input, select { font: inherit; color: inherit; margin: 0; padding: 0; border: 0; background: none; }
  svg { display: block; flex: none; }
  .defs { position: absolute; }
  .i24 { width: 24px; height: 24px; } .i26 { width: 28px; height: 26px; } .i22 { width: 22px; height: 22px; }
  .i20 { width: 20px; height: 20px; } .i16 { width: 16px; height: 16px; } .i14 { width: 14px; height: 14px; }

  .app { position: relative; display: flex; flex-direction: column; height: 100vh; overflow: hidden; font: 13px/16px 'Liberation Sans', Arial, sans-serif; color: #000; background: #dfe2ea; }
  .title, .menu, .ghtitle, .vlabel, .vtabs { font-family: 'Open Sans', 'Noto Sans', sans-serif; }

  .title { display: flex; align-items: center; height: 28px; background: #fff; font-family: 'Noto Sans', sans-serif; font-size: 14px; }
  .caption { margin-left: 6px; flex: 1; }
  .winbtns { display: flex; gap: 46px; padding-right: 20px; }
  .menu { display: flex; gap: 14px; height: 26px; padding: 3px 7px 0; background: #fff; font-size: 14px; border-bottom: 2px solid #f0f0f0; box-sizing: border-box; }
  .menu button { white-space: nowrap; }

  .command { margin: 3px 0 0 3px; border-left: 2px solid #b8c0d2; background: #fff; font-size: 14px; line-height: 17px; }
  .log { display: flex; justify-content: space-between; height: 57px; border-bottom: 1px solid #a0a9bc; }
  .lines { padding: 0 1px; font-size: 15px; }
  .scroll { display: flex; flex-direction: column; justify-content: space-between; width: 15px; padding: 7px 0; background: #f0f0f0; }
  .scroll button { display: flex; justify-content: flex-end; }
  .prompt { display: flex; align-items: center; height: 21px; }
  .prompt label { padding: 0 4px 3px 1px; font-weight: 700; }
  .prompt input { flex: 1; outline: 0; }
  .spin { display: grid; gap: 1px; width: 14px; }
  .spin button { display: grid; place-items: center; height: 10px; background: #e8e8e8; border: 1px solid #999; box-sizing: border-box; }

  .bars { margin-top: 3px; border-top: 1px solid #c0c6d4; border-bottom: 1px solid #98a2b6; padding-top: 4px; }
  .tabs { display: flex; align-items: flex-end; height: 19px; padding-left: 5px; border-bottom: 1px solid #9aa5bb; box-sizing: border-box; }
  .tab { position: relative; height: 18px; padding: 0 12px 0 13px; background: #d2d8e8; border: solid #9ba6ba; border-width: 1px 1px 0 0; border-radius: 0 4px 0 0; white-space: nowrap; box-sizing: border-box; }
  .tab::before { content: ''; position: absolute; left: -2px; top: -1px; width: 12px; height: 17px; background: inherit; border: solid #9ba6ba; border-width: 1px 0 0 1px; transform: skewX(-33deg); z-index: 0; }
  .tab.on { z-index: 1; height: 19px; margin: 0 0 -1px 3px; padding: 0 12px 0 10px; background: #fff; }
  .tab.on::before { height: 18px; width: 10px; z-index: -1; }
  .tab.on + .tab::before { display: none; }
  .cog { margin-left: auto; margin-right: -4px; padding-bottom: 3px; }
  .tools { display: flex; height: 38px; padding: 0 4px; background: linear-gradient(#f4f5f7, #dcdfe8); }
  .tool { position: relative; display: grid; place-items: center; width: 28px; height: 28px; }
  .fly::after { content: ''; position: absolute; right: -1px; bottom: 0; border-left: 6px solid transparent; border-bottom: 6px solid #666; }
  .tools .tool { height: 30px; }
  .tools .fly::after { bottom: 2px; }

  .work { display: flex; flex: 1; min-height: 0; }
  .side { display: flex; flex-direction: column; width: 285px; border-right: 1px solid #c3c9d6; margin-bottom: 4px; }
  .grip { height: 1px; margin: 2px 2px 0 1px; border: solid #b4bccd; border-width: 1px 0; }
  .panel { display: flex; flex-direction: column; flex: 1; min-height: 0; width: 282px; border-right: 1px solid #9aa5bb; background: linear-gradient(#dfe2ea 60px, #fff 60px); }
  .panel .grip { width: 280px; flex: none; }
  .ptabs { display: flex; align-items: center; height: 22px; margin-top: 2px; font: 14px/18px Roboto, sans-serif; }
  .ptab { position: relative; display: flex; align-items: center; gap: 2px; width: 52px; height: 22px; padding-left: 4px; border-bottom: 1px solid #9aa5bb; box-sizing: border-box; background: #d2d8e8; border-top: 1px solid #b4bccd; border-left: 1px solid #b4bccd; border-radius: 4px 0 0 0; white-space: nowrap; }
  .ptab:nth-of-type(5) { width: 54px; }
  .ptab::after { content: ''; position: absolute; right: -4px; top: -1px; width: 8px; height: 20px; background: inherit; border: solid #b4bccd; border-width: 1px 1px 0 0; transform: skewX(35deg); z-index: 1; }
  .ptab span { position: relative; z-index: 2; }
  .ptab.on { background: #f4f5f8; border-bottom-color: #f4f5f8; border-left: 0; }
  .pcog { flex: 1; display: flex; justify-content: flex-end; align-items: center; padding-right: 1px; height: 22px; }
  .ptools { display: flex; flex: none; height: 23px; background: #f4f5f8; border-top: 1px solid #9aa5bb; border-bottom: 1px solid #9aa5bb; }
  .ptools button { display: grid; place-items: center; width: 28px; }
  .layers { table-layout: fixed; width: 100%; border-collapse: collapse; background: #fff; overflow: hidden; }
  .c1 { width: 152px; } .c2 { width: 68px; } .c3 { width: 17px; }
  .layers th { height: 25px; padding: 0 0 0 6px; text-align: left; font-weight: 400; border-right: 1px solid #e0e0e0; }
  .layers th:first-child { border-right: 0; }
  .layers th:nth-child(2) { padding-left: 43px; }
  .layers td { height: 19px; padding: 0; border-bottom: 1px dotted #ddd; }
  .layers td:first-child { padding-left: 8px; white-space: nowrap; }
  .layers .cur td:first-child { font-weight: 700; font-size: 14px; padding-left: 9px; }
  .layers td:nth-child(2) svg { margin-left: 46px; }
  .layers td:nth-child(3) svg { margin-left: 3px; }
  .layers td:nth-child(4) svg { margin-left: 4px; }
  .swatch { display: block; width: 12px; height: 12px; margin-left: 3px; border: 1px solid #000; box-sizing: border-box; }
  .mat { display: block; width: 12px; height: 14px; margin-left: 4px; border: 1px dotted #ddd; border-radius: 50%; }
  .hscroll { display: flex; height: 19px; width: 282px; background: #f0f0f0; border-bottom: 1px solid #9aa5bb; }
  .hscroll button { width: 20px; padding-left: 5px; }
  .filters { height: 153px; padding-top: 6px; width: 282px; }
  .checks { padding: 5px 0 0 1px; }
  .frow { display: flex; height: 21px; align-items: center; }
  .frow label, .osnap label { display: flex; align-items: center; gap: 4px; white-space: nowrap; }
  .frow label { margin-right: 6px; }
  .cb { appearance: none; flex: none; display: grid; place-items: center; width: 21px; height: 21px; border: 1px solid #222; background: #fff; box-sizing: border-box; }
  .cb:checked::before { content: ''; width: 14px; height: 11px; background: #444; clip-path: polygon(0 50%, 12% 42%, 36% 74%, 90% 0, 100% 10%, 38% 100%); }
  .cb:disabled { width: 19px; height: 19px; background: #dcdcdc; border-color: #aaa; }
  .more { margin-left: auto; margin-right: 6px; font-weight: 700; font-size: 15px; }

  .palette { width: 75px; }
  .palette .grip { margin: 2px 7px 0 5px; }
  .pgrid { display: grid; grid-template-columns: 29px 29px; margin-left: 2px; padding-top: 1px; }

  .viewcol { display: flex; flex-direction: column; flex: 1; min-width: 0; }
  .viewport { position: relative; flex: 1; background: #fff; border-bottom: 1px solid #9aa5bb; overflow: hidden; }
  .scene { position: absolute; inset: 0; width: 100%; height: 100%; }
  .scene text { font: italic 700 14px 'Liberation Mono', monospace; fill: #555; }
  .ring polygon { fill: none; stroke: rgba(148, 0, 0, 0.72); stroke-width: 3; }
  .edge { fill: none; stroke: #8e0606; stroke-width: 3; }
  .axis { fill: none; stroke: #666; stroke-width: 3; shape-rendering: crispEdges; stroke-dasharray: 6 3; }
  .vlabel { position: relative; display: flex; width: 74px; height: 23px; background: #8fa8c4; font-size: 14px; }
  .vlabel button { flex: 1; }
  .vlabel .vdrop { flex: none; display: grid; place-items: center; width: 10px; border-left: 1px solid #333; }
  .vtabs { display: flex; height: 26px; font-size: 14px; }
  .vtab { position: relative; height: 25px; padding: 1px 8px 0 14px; background: #d2d8e8; border: solid #9aa5bb; border-width: 0 1px 1px 0; border-radius: 0 0 4px 0; box-sizing: border-box; }
  .vtab::before { content: ''; position: absolute; left: -1px; bottom: -1px; width: 11px; height: 12px; background: linear-gradient(48deg, #dfe2ea 48%, #9aa5bb 48%, #9aa5bb 56%, transparent 56%); }
  .vtab.on { background: #fff; padding-left: 12px; }
  .vtab.plus { background: #dfe2ea; padding: 0 13px 0 18px; }

  .osnap { display: flex; align-items: center; gap: 5px; height: 28px; margin-top: 3px; margin-left: 2px; padding-left: 3px; border-left: 2px solid #b8c0d2; }
  .status { display: flex; height: 22px; border-top: 1px solid #9aa5bb; font-size: 14px; margin-top: 1px; box-sizing: border-box; }
  .cell { padding: 3px 0 0; text-align: center; border-right: 1px solid #9aa5bb; box-sizing: border-box; white-space: nowrap; overflow: hidden; line-height: 17px; }
  .w65 { width: 65px; } .w88 { width: 88px; } .w53 { width: 54px; }
  .tight { text-align: left; padding-left: 3px; }
  .cur.cell { display: flex; align-items: center; gap: 3px; width: 173px; padding-left: 3px; }
  .cur i { width: 15px; height: 15px; background: #6a6a6a; border: 1px solid #111; box-sizing: border-box; }
  .act { background: #e4f2fc; font-weight: 700; }
  .rec { width: 130px; }
  .cpu { border: 0; padding-left: 3px; }
  .taskbar { height: 4px; background: #0c0605; }

  .gh { position: absolute; left: 22px; top: 483px; display: flex; flex-direction: column; width: 704px; height: 442px; box-sizing: border-box; border: 1px solid #9a9a9a; background: #f0f0f0; box-shadow: 0 3px 16px rgba(0, 0, 0, 0.35); font-size: 14px; }
  .ghtitle { display: flex; align-items: center; justify-content: space-between; height: 37px; padding: 0 23px 0 9px; background: #fff; color: #999; font-size: 14px; }
  .ghbtns { display: flex; gap: 46px; }
  .ghmenu { display: flex; gap: 20px; height: 25px; padding: 0 11px 0 17px; background: linear-gradient(90deg, #f0f0f0, #fcfcfc); font-size: 14px; }
  .doc { margin-left: auto; }
  .ghtabs { display: flex; gap: 18px; height: 22px; color: #777; font-size: 13px; }
  .ghtabs button { padding-top: 3px; }
  .ghtabs .on { z-index: 1; padding: 0 10px 2px 9px; margin-right: -11px; color: #000; background: linear-gradient(#fff, #f0f0f0); border: solid #999; border-width: 1px 1px 0 0; border-radius: 5px 5px 0 0; height: 23px; box-sizing: border-box; }
  .ribbon { display: flex; align-items: flex-start; gap: 3px; height: 84px; padding: 2px 0 0 3px; box-sizing: border-box; border-top: 1px solid #999; border-right: 1px solid #999; border-radius: 0 8px 0 0; background: linear-gradient(#d8d8d8, #f0f0f0); }
  .group { border: 1px solid #8a8a8a; border-radius: 4px; overflow: hidden; background: linear-gradient(#dadada, #f4f4f4); }
  .gicons { display: flex; height: 58px; padding: 1px 2px 0 1px; box-sizing: border-box; }
  .block { display: flex; }
  .block + .block { margin-left: 5px; padding-left: 4px; border-left: 1px solid #c0c0c0; }
  .gcol { display: grid; grid-template-rows: 28px 28px; }
  .gcol button { display: grid; place-items: center; width: 28px; height: 28px; }
  .gname { display: flex; align-items: center; height: 13px; padding-right: 2px; background: #1c1c1c; color: #fff; font-size: 11px; line-height: 13px; }
  .gname span { flex: 1; text-align: center; }
  .ghbar { display: flex; align-items: center; height: 30px; margin: 2px 2px 0 1px; padding: 0 1px 0 1px; border: solid #777; border-width: 1px 0 0 1px; background: linear-gradient(#fff, #f2f2f2); box-sizing: border-box; }
  .ghbar button { display: grid; place-items: center; width: 28px; height: 28px; }
  .ghbar .gap3 { margin-left: 3px; }
  .ghbar .sep { width: 1px; height: 20px; margin: 0 4px; background: #bbb; }
  .ghbar .wide { margin: 0 8px; }
  .zoombox { position: relative; width: 92px; height: 28px; margin: 0 5px 0 1px; }
  .zoombox select { appearance: none; width: 100%; height: 100%; padding-left: 4px; background: #fff; border: 1px solid #777; font: 15px 'Open Sans', sans-serif; }
  .zoombox svg { position: absolute; right: 5px; top: 11px; }
  .ghbar .dd { display: flex; align-items: center; gap: 6px; width: 39px; }
  .ghbar .last { width: 34px; }
  .tri { border: solid transparent; border-width: 3px 3px 0; border-top-color: #000; }
  .push { flex: 1; }
  .ghbar .sel { background: #fff; border: 1px solid #0078d7; box-sizing: border-box; }
  .canvas { position: relative; height: 216px; margin: 0 2px 0 1px; border-left: 1px solid #777; overflow: hidden; background: repeating-linear-gradient(135deg, #d3d0c8 0 2px, #cbc8bf 2px 4px); font-family: 'Noto Sans', sans-serif; }
  .wires { position: absolute; inset: 0; width: 100%; height: 100%; }
  .node { position: absolute; box-sizing: border-box; border: 1px solid #333; border-radius: 3px; background: linear-gradient(#f0f0f0, #c8c8c8); box-shadow: 1px 2px 2px rgba(0, 0, 0, 0.3); color: #222; }
  .slider { left: 147px; top: 95px; display: flex; width: 270px; height: 23px; }
  .slider label { width: 135px; text-align: center; line-height: 20px; background: linear-gradient(#c0c0cc, #92919f); border-right: 1px solid #333; }
  .track { position: relative; flex: 1; padding: 0 8px; }
  .track input { appearance: none; display: block; width: 100%; height: 21px; background: repeating-linear-gradient(90deg, #bbb 0 1px, transparent 1px 11px) 5px 5px / 100% 5px no-repeat, linear-gradient(#bbb, #bbb) 5px 10px / 100% 1px no-repeat; }
  .track input::-webkit-slider-thumb { appearance: none; width: 7px; height: 7px; background: #fff; border: 2px solid #111; box-sizing: border-box; transform: rotate(45deg); }
  .track output { position: absolute; left: 58px; top: 0; line-height: 20px; }
  .param { left: 509px; top: 96px; display: grid; place-items: center; width: 57px; height: 27px; background: linear-gradient(#e0e0e8, #92919f); }
  .panel1 { left: 625px; top: 77px; width: 90px; height: 23px; padding-left: 2px; background: #fff; font: 15px/13px 'Liberation Mono', monospace; color: #333; }
  .add { left: 625px; top: 113px; display: flex; align-items: center; gap: 10px; width: 90px; height: 49px; padding-left: 8px; }
  .io { display: grid; line-height: 22px; }
  .add b { width: 18px; height: 18px; border: 1px solid #666; border-radius: 3px; background: #eee; line-height: 17px; font-size: 16px; text-align: center; color: #111; }
  .note { left: 614px; top: 188px; width: 100px; height: 40px; padding-left: 34px; background: #fff95a; font: 15px/28px 'Liberation Mono', monospace; }
  .stub { left: -4px; top: 187px; width: 11px; height: 28px; background: linear-gradient(#ddd, #777); border-radius: 0; }
  .compass { position: absolute; left: 644px; top: 161px; width: 48px; height: 48px; }
  .needle { position: absolute; left: 638px; top: 188px; }
  .ghstatus { display: flex; align-items: center; gap: 3px; height: 24px; padding: 3px 3px 0 3px; background: linear-gradient(90deg, #f0f0f0, #fcfcfc); box-sizing: border-box; }
  .ghstatus em { margin-left: auto; margin-right: 8px; font-style: normal; color: #888; }
  .ghstatus > svg { align-self: flex-end; margin-bottom: 2px; }
</style>
